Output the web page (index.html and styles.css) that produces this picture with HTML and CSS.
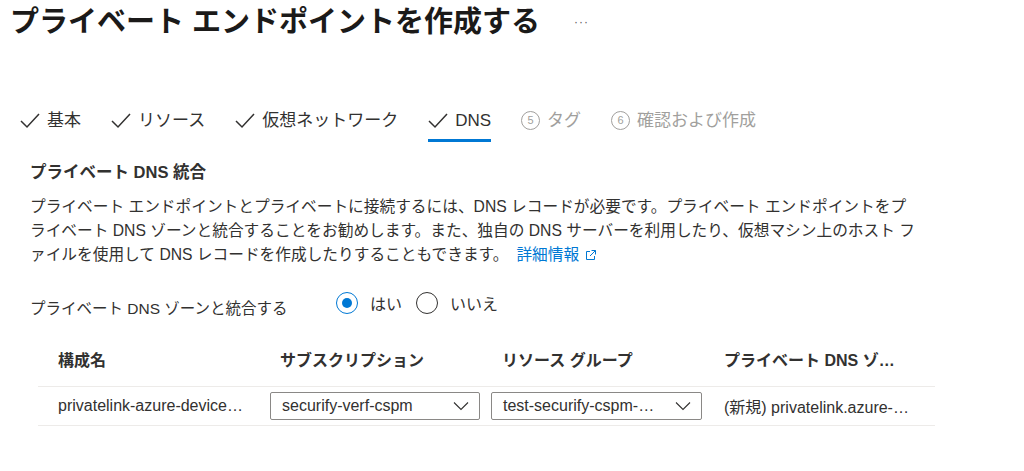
FILE: index.html
```html
<!DOCTYPE html>
<html lang="ja">
<head>
<meta charset="utf-8">
<title>プライベート エンドポイントを作成する</title>
<link rel="stylesheet" href="styles.css">
</head>
<body>
<div class="page">
  <header class="title-bar">
    <h1 class="title">プライベート エンドポイントを作成する</h1>
    <span class="more">···</span>
  </header>

  <nav class="tabs">
    <div class="tab done"><svg class="check" viewBox="0 0 20 16" width="20" height="16"><path d="M1 8 L7 14 L19 1" fill="none" stroke="#323130" stroke-width="1.5"/></svg><span>基本</span></div>
    <div class="tab done"><svg class="check" viewBox="0 0 20 16" width="20" height="16"><path d="M1 8 L7 14 L19 1" fill="none" stroke="#323130" stroke-width="1.5"/></svg><span>リソース</span></div>
    <div class="tab done"><svg class="check" viewBox="0 0 20 16" width="20" height="16"><path d="M1 8 L7 14 L19 1" fill="none" stroke="#323130" stroke-width="1.5"/></svg><span>仮想ネットワーク</span></div>
    <div class="tab done active"><svg class="check" viewBox="0 0 20 16" width="20" height="16"><path d="M1 8 L7 14 L19 1" fill="none" stroke="#323130" stroke-width="1.5"/></svg><span class="latin">DNS</span></div>
    <div class="tab disabled"><span class="num">5</span><span>タグ</span></div>
    <div class="tab disabled"><span class="num">6</span><span>確認および作成</span></div>
  </nav>

  <section class="section">
    <h2 class="heading">プライベート DNS 統合</h2>
    <p class="desc">プライベート エンドポイントとプライベートに接続するには、DNS レコードが必要です。プライベート エンドポイントをプライベート DNS ゾーンと統合することをお勧めします。また、独自の DNS サーバーを利用したり、仮想マシン上のホスト ファイルを使用して DNS レコードを作成したりすることもできます。<a class="link" href="#">詳細情報<svg class="ext" viewBox="0 0 12 12" width="12" height="12"><path d="M5 2.5 H1.5 V10.5 H9.5 V7" fill="none" stroke="#0078d4" stroke-width="1"/><path d="M6.5 1.5 H10.5 V5.5 M10.5 1.5 L5 7" fill="none" stroke="#0078d4" stroke-width="1"/></svg></a></p>

    <div class="radio-row">
      <div class="radio-label">プライベート DNS ゾーンと統合する</div>
      <div class="radio-group">
        <label class="radio"><span class="circle checked"></span><span>はい</span></label>
        <label class="radio"><span class="circle"></span><span>いいえ</span></label>
      </div>
    </div>
  </section>

  <div class="table">
    <div class="row head">
      <div class="cell c1">構成名</div>
      <div class="cell c2">サブスクリプション</div>
      <div class="cell c3">リソース グループ</div>
      <div class="cell c4">プライベート DNS ゾ…</div>
    </div>
    <div class="row body">
      <div class="cell c1">privatelink-azure-device…</div>
      <div class="cell c2"><div class="select"><span>securify-verf-cspm</span><svg viewBox="0 0 16 10" width="16" height="10"><path d="M1 1.5 L8 8.5 L15 1.5" fill="none" stroke="#323130" stroke-width="1.1"/></svg></div></div>
      <div class="cell c3"><div class="select w2"><span>test-securify-cspm-…</span><svg viewBox="0 0 16 10" width="16" height="10"><path d="M1 1.5 L8 8.5 L15 1.5" fill="none" stroke="#323130" stroke-width="1.1"/></svg></div></div>
      <div class="cell c4">(新規) privatelink.azure-…</div>
    </div>
  </div>
</div>
</body>
</html>
```

FILE: styles.css
```css
* { box-sizing: border-box; }
html, body { margin: 0; padding: 0; background: #ffffff; }
body {
  font-family: "Liberation Sans", "Noto Sans CJK JP", sans-serif;
  color: #323130;
  font-size: 16px;
}
.page { width: 1024px; height: 471px; overflow: hidden; }

.title-bar {
  display: flex;
  align-items: center;
  height: 44px;
  padding-left: 10px;
}
.title {
  margin: 0;
  font-size: 29px;
  font-weight: 700;
  color: #1b1a19;
  line-height: 44px;
  letter-spacing: 0;
}
.more {
  margin-left: 34px;
  font-size: 12px;
  color: #605e5c;
  letter-spacing: 1px;
}

.tabs {
  display: flex;
  gap: 30px;
  margin-top: 66px;
  padding-left: 20px;
}
.tab {
  display: flex;
  align-items: center;
  gap: 7px;
  height: 32px;
  padding-bottom: 8px;
  font-size: 17px;
  line-height: 24px;
  border-bottom: 3px solid transparent;
}
.tab .check { flex: none; }
.tab.active { border-bottom-color: #0078d4; }
.tab .latin { font-size: 17px; }
.tab.disabled { color: #a19f9d; }
.num {
  display: inline-flex;
  align-items: center;
  justify-content: center;
  width: 19px;
  height: 19px;
  border: 1px solid #a19f9d;
  border-radius: 50%;
  font-size: 11px;
  line-height: 1;
}

.section { padding-left: 30px; }
.heading {
  margin: 18px 0 0;
  font-size: 16.5px;
  font-weight: 700;
  line-height: 24px;
  color: #323130;
}
.desc {
  margin: 11px 0 0;
  width: 890px;
  font-size: 15.7px;
  line-height: 24px;
  line-break: normal;
}
.link {
  color: #0078d4;
  text-decoration: none;
  margin-left: 8px;
}
.ext { margin-left: 6px; vertical-align: -1px; }

.radio-row {
  display: flex;
  align-items: center;
  margin-top: 24px;
  height: 24px;
}
.radio-label {
  width: 306px;
  padding-top: 7px;
  font-size: 15.5px;
}
.radio-group { display: flex; gap: 14px; }
.radio {
  display: flex;
  align-items: center;
  gap: 12px;
  font-size: 16px;
}
.circle {
  width: 22px;
  height: 22px;
  border: 1px solid #323130;
  border-radius: 50%;
  display: inline-flex;
  align-items: center;
  justify-content: center;
}
.circle.checked { border-color: #0078d4; }
.circle.checked::after {
  content: "";
  width: 10px;
  height: 10px;
  border-radius: 50%;
  background: #0078d4;
}

.table {
  margin: 23px 0 0 38px;
  width: 897px;
}
.row {
  display: grid;
  grid-template-columns: 232px 221px 233px 211px;
  border-bottom: 1px solid #edebe9;
}
.row.head { height: 49px; padding-top: 11px; align-items: start; line-height: 24px; }
.row.body { height: 39px; align-items: center; }
.cell { white-space: nowrap; overflow: hidden; font-size: 16px; }
.head .cell { font-weight: 700; font-size: 16px; }
.c1 { padding-left: 20px; }
.head .c2 { padding-left: 10px; }
.head .c3 { padding-left: 11px; }

.select {
  display: flex;
  align-items: center;
  justify-content: space-between;
  width: 210px;
  height: 28px;
  border: 1px solid #8a8886;
  border-radius: 2px;
  padding: 0 10px 0 11px;
  font-size: 16px;
}
.select.w2 { width: 211px; }
```
